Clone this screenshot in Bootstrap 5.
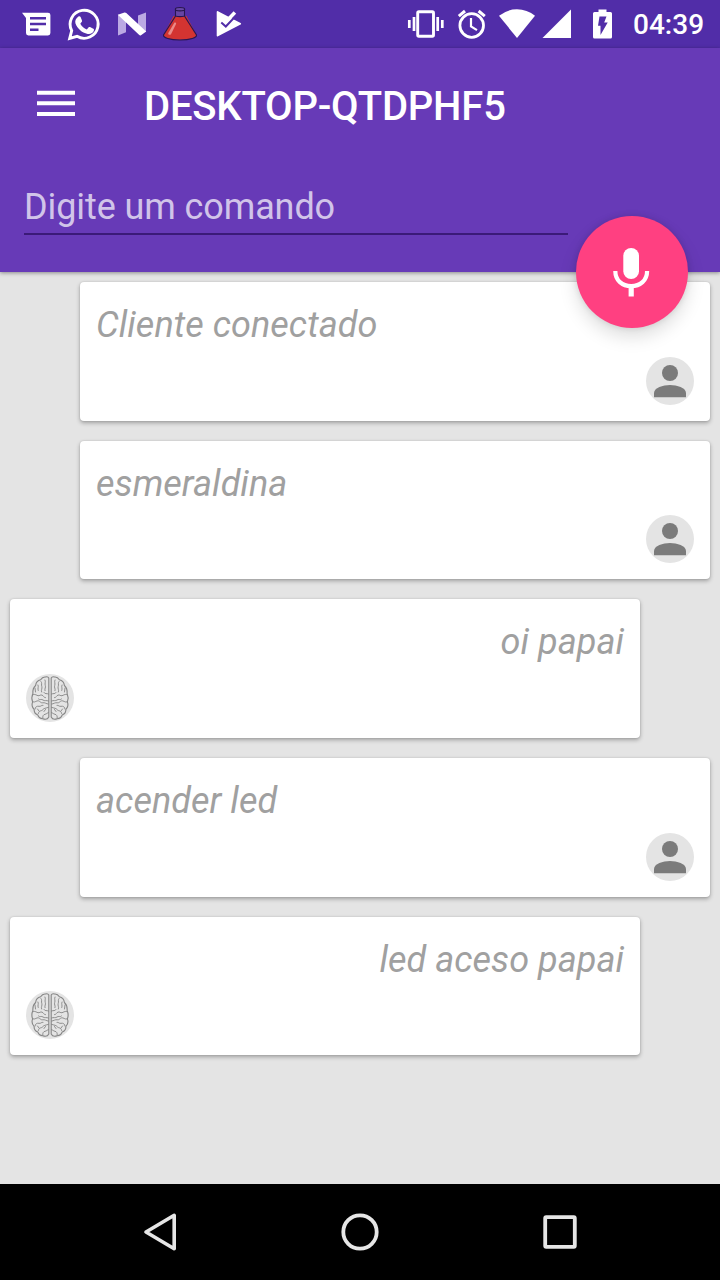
<!DOCTYPE html>
<html lang="pt-BR">
<head>
<meta charset="utf-8">
<meta name="viewport" content="width=device-width, initial-scale=1">
<title>DESKTOP-QTDPHF5</title>
<link href="https://cdn.jsdelivr.net/npm/bootstrap@5.3.0/dist/css/bootstrap.min.css" rel="stylesheet">
<style>
  body { font-family: Roboto, sans-serif; background: #e4e4e4; height: 1280px; overflow: hidden; }
  svg { display: block; flex: none; }
  .status-bar { height: 48px; background: #512da8; color: #fff; padding-left: 12px; padding-right: 15px; }
  .clock { font-size: 28px; font-weight: 500; line-height: 48px; width: 72px; padding-top: 1px; white-space: nowrap; }
  .app-header { height: 224px; background: #673ab7; box-shadow: 0 1px 4px rgba(0,0,0,.4); z-index: 2; }
  .app-title { font-size: 40px; font-weight: 500; letter-spacing: -.2px; line-height: 48px; color: #fff; margin: 0 0 0 68px; padding-top: 5px; }
  .toolbar { height: 112px; padding-left: 36px; }
  .command { width: 544px; height: 52px; margin: 22.500px 0 0 24px; padding: 0 0 1px; border: 0; border-bottom: 2px solid #3b1a78;
    border-radius: 0; background: transparent; color: #fff; font-size: 36px; letter-spacing: -.1px; line-height: 44px; }
  .command:focus { background: transparent; box-shadow: none; }
  .command::placeholder { color: #d1c4e9; opacity: 1; }
  .mic { width: 112px; height: 112px; right: 32px; bottom: -56px; background: #ff4081; box-shadow: 0 9px 18px rgba(0,0,0,.13), 0 0 6px rgba(0,0,0,.12); }
  .messages { gap: 20px; padding: 10px; }
  .message { width: 630px; height: 138.67px; border: 0; border-radius: 4px; padding: 22px 16px 16px; box-shadow: 0 2px 4px rgba(0,0,0,.3), 0 0 2px rgba(0,0,0,.12); }
  .message p { font-size: 36px; letter-spacing: .05px; line-height: 42px; font-style: italic; color: #a0a0a0; }
  .nav-keys { height: 96px; background: #000; }
</style>
</head>
<body class="d-flex flex-column">
<svg width="0" height="0" class="position-absolute" aria-hidden="true">
  <defs>
    <symbol id="person" viewBox="0 0 48 48">
      <circle cx="24" cy="24" r="24" fill="#e4e4e4"/>
      <circle cx="24" cy="16" r="8" fill="#7b7b7b"/>
      <path d="M8 40.300V36c0-5.200 9-8 16-8s16 2.800 16 8v4.300z" fill="#7b7b7b"/>
    </symbol>
    <g id="lobe" fill="none" stroke="#858585" stroke-width=".9" stroke-linecap="round" stroke-linejoin="round">
      <path d="M22.800 4V43c-1 2-3.500 2.600-6 1.700-2.900 0-4.300-1.700-5-3.700-2.800-1-3.800-3.500-3.700-5.700-2-2-2.400-5-1.500-7.400-1.100-3-.8-6 .3-8.400-.3-3.400.8-6.300 2.700-8 .4-3 2.500-5.200 5-5.700C16 3.500 18 2.800 19.500 3c1.500-.5 2.800 0 3.300 1z" stroke-width="1.100"/>
      <path d="M19 6c1 2-.5 3.500.3 5.500s-1 3-.3 5.200M15 7.500c1.500 1.500 0 3 .8 5s-1.200 3.500-.2 5.500M12 11c1 2-.7 3.300.2 5.500M9 14l.5 4M7.500 20.500c2-.5 3 .8 4.500 1.200s2.300-1.200 4-.6 1.500 2.500 3.500 2.600M22.500 20c-2-1-3.500.5-4.500-1.500M22.500 27c-2-1-4 .3-5.500-1s-3 .5-4.500-1M7.300 28c2 .5 3.200-1.500 5-1.200s2.500 2.500 4.500 2 3.300 1 5.500 1.300M9 35c0-2 2-3.200 4-2.700s2.300-1.500 4-1M12.300 39.500c.3-2 1.700-2.600 3-2.800s2-2.200 3.600-2.400 2.300-.8 3.600-1M16.800 44c-.3-2 .5-3.300 2.200-3.700s2-1.200 3.500-1.700M13 37l-1.500-2M18 37.500l1.500-2"/>
    </g>
    <symbol id="brain" viewBox="0 0 48 48">
      <circle cx="24" cy="24" r="24" fill="#e4e4e4"/>
      <use href="#lobe"/>
      <use href="#lobe" transform="translate(48 0) scale(-1 1)"/>
    </symbol>
  </defs>
</svg>

<div class="status-bar d-flex justify-content-between flex-shrink-0">
  <div class="d-flex">
    <svg width="48" height="48" viewBox="12 0 48 48"><path fill="#fff" d="M22 12.700H48a2.400 2.400 0 0 1 2.400 2.400V33a2.400 2.400 0 0 1-2.400 2.400H28.300A2.400 2.400 0 0 1 26 33V18z"/><path stroke="#512da8" stroke-width="2.500" d="M30 18.300H46M30 24H46M30 29.700H38.500"/></svg>
    <svg width="48" height="48" viewBox="60 0 48 48"><path fill="none" stroke="#fff" stroke-width="2.900" d="M69.700 38.400l2-7.700A14 14 0 1 1 77 36.300z"/><path fill="#fff" d="M78.200 16.800c.7-.7 2-.6 2.400.3l1.400 3.300c.2.600 0 1.200-.4 1.700l-1.300 1.600c1.600 2.800 3.700 4.500 6.500 5.700l1.700-2c.4-.5.9-.6 1.500-.3l3.400 1.700c.7.400.7.800.5 1.700-.7 2.700-3.500 3.900-6.200 3.400-6-1.300-10.400-5.400-12.300-10.700-.7-2.500.8-5 2.800-6.400z"/></svg>
    <svg width="48" height="48" viewBox="108 0 48 48"><path fill="#bba9e3" d="M118 14.500l8 6V32.200l-8 3.200zM146 12.500V32l-8-6V15.500z"/><path fill="#fff" d="M117.800 14.700l6.700-2.200q1-.2 1.800.6L146.200 31.500 141 35.200q-1 .5-2-.4z"/></svg>
    <svg width="48" height="48" viewBox="156 0 48 48"><path fill="#d33431" d="M173.500 16h13l9.800 18.800c.7 2.700-6 5-16.300 5s-17-2.300-16.300-5z"/><path fill="#6745a4" d="M175.500 9.500h9V17h-9z"/><path fill="#e98b88" d="M174.500 22.500c1.500-.4 2 .4 1.300 2l-4.800 9.700c-1.200 1.200-3.400.4-2.700-1.200z"/><path fill="none" stroke="#29164f" stroke-width="1.100" d="M175.500 9.500V16l-12 19c-.5 2.700 6.200 5 16.500 5s17-2.300 16.500-5l-12-19V9.500M175.500 16q4.500 1.200 9 0"/><ellipse cx="180" cy="9.200" rx="4.700" ry="1.700" fill="#6848a8" stroke="#29164f" stroke-width="1.100"/></svg>
    <svg width="48" height="48" viewBox="204 0 48 48"><path fill="#fff" stroke="#fff" stroke-width="1.800" stroke-linejoin="round" d="M217.600 12l22.600 11.800L217.600 35.500z"/><path fill="#512da8" d="M231 17.500L234.500 13l5 3-3.500 4z"/><path fill="#fff" d="M233.600 11.200L236.200 13.800 226.500 23.700 224 21.200z"/><path fill="none" stroke="#512da8" stroke-width="2" d="M221.300 22.500L225.800 26.500 237 14.600"/></svg>
  </div>
  <div class="d-flex">
    <svg width="45" height="48" viewBox="403 0 45 48"><rect x="417.700" y="11.700" width="15.800" height="24.600" rx="1.200" fill="none" stroke="#fff" stroke-width="2.900"/><path stroke="#fff" stroke-width="2.700" d="M409.300 20v8M414 17v14M437.700 17v14M442.300 20v8"/></svg>
    <svg width="47" height="48" viewBox="448 0 47 48"><circle cx="471.700" cy="25.500" r="11.800" fill="none" stroke="#fff" stroke-width="2.800"/><path fill="none" stroke="#fff" stroke-width="2.200" d="M471 18v8.500l6 3.600"/><path stroke="#fff" stroke-width="3" d="M458.800 16.200L465 11M478.600 11l6.200 5.200"/></svg>
    <svg width="44" height="48" viewBox="495 0 44 48"><path fill="#fff" d="M499 15.800Q507 9.300 517 9.300T535 15.800L517 38z"/></svg>
    <svg width="42" height="48" viewBox="539 0 42 48"><path fill="#fff" d="M571 9.500V38H542.500z"/></svg>
    <svg width="52" height="48" viewBox="581 0 52 48"><path fill="#fff" d="M598.500 9.500h8V12h4q1.500 0 1.500 1.500V37q0 1.500-1.500 1.500H594.500q-1.500 0-1.500-1.500V13.500q0-1.500 1.500-1.500h4z"/><path fill="#512da8" d="M599.500 16.500h7l-2.300 6h3.500l-7.200 12.500v-9.300H598z"/></svg>
    <div class="clock">04:39</div>
  </div>
</div>

<header class="app-header position-relative flex-shrink-0">
  <div class="toolbar d-flex align-items-center">
    <svg width="40" height="32" viewBox="0 0 40 32"><path stroke="#fff" stroke-width="4" d="M1 4.800H39M1 15.200H39M1 26H39"/></svg>
    <h1 class="app-title">DESKTOP-QTDPHF5</h1>
  </div>
  <input class="command form-control" type="text" placeholder="Digite um comando" aria-label="Digite um comando">
  <button class="mic btn rounded-circle border-0 position-absolute p-0" aria-label="Falar">
    <svg width="112" height="112" viewBox="576 216 112 112"><rect x="623.300" y="248" width="15.700" height="31" rx="7.850" fill="#fff"/><path fill="none" stroke="#fff" stroke-width="4.200" d="M615.300 271c0 9.500 7 15.200 15.900 15.200s15.900-5.700 15.900-15.200"/><path stroke="#fff" stroke-width="5.200" d="M631.200 286v10.500"/></svg>
  </button>
</header>

<main class="messages d-flex flex-column flex-grow-1">
  <article class="message card align-self-end justify-content-between">
    <p class="m-0">Cliente conectado</p>
    <svg class="align-self-end" width="48" height="48"><use href="#person"/></svg>
  </article>
  <article class="message card align-self-end justify-content-between">
    <p class="m-0">esmeraldina</p>
    <svg class="align-self-end" width="48" height="48"><use href="#person"/></svg>
  </article>
  <article class="message card align-self-start justify-content-between">
    <p class="m-0 text-end">oi papai</p>
    <svg class="align-self-start" width="48" height="48"><use href="#brain"/></svg>
  </article>
  <article class="message card align-self-end justify-content-between">
    <p class="m-0">acender led</p>
    <svg class="align-self-end" width="48" height="48"><use href="#person"/></svg>
  </article>
  <article class="message card align-self-start justify-content-between">
    <p class="m-0 text-end">led aceso papai</p>
    <svg class="align-self-start" width="48" height="48"><use href="#brain"/></svg>
  </article>
</main>

<nav class="nav-keys d-flex justify-content-center flex-shrink-0" aria-label="Sistema">
  <svg width="200" height="96" viewBox="60 1184 200 96"><path fill="none" stroke="#e6e6e6" stroke-width="3.600" stroke-linejoin="round" d="M174.200 1215.300V1248.700L146 1232z"/></svg>
  <svg width="200" height="96" viewBox="260 1184 200 96"><circle cx="360" cy="1232" r="16.700" fill="none" stroke="#e6e6e6" stroke-width="3.800"/></svg>
  <svg width="200" height="96" viewBox="460 1184 200 96"><rect x="545.200" y="1217.200" width="29.600" height="29.600" rx="1" fill="none" stroke="#e6e6e6" stroke-width="3.800"/></svg>
</nav>
<script src="https://cdn.jsdelivr.net/npm/bootstrap@5.3.0/dist/js/bootstrap.bundle.min.js"></script>
</body>
</html>
